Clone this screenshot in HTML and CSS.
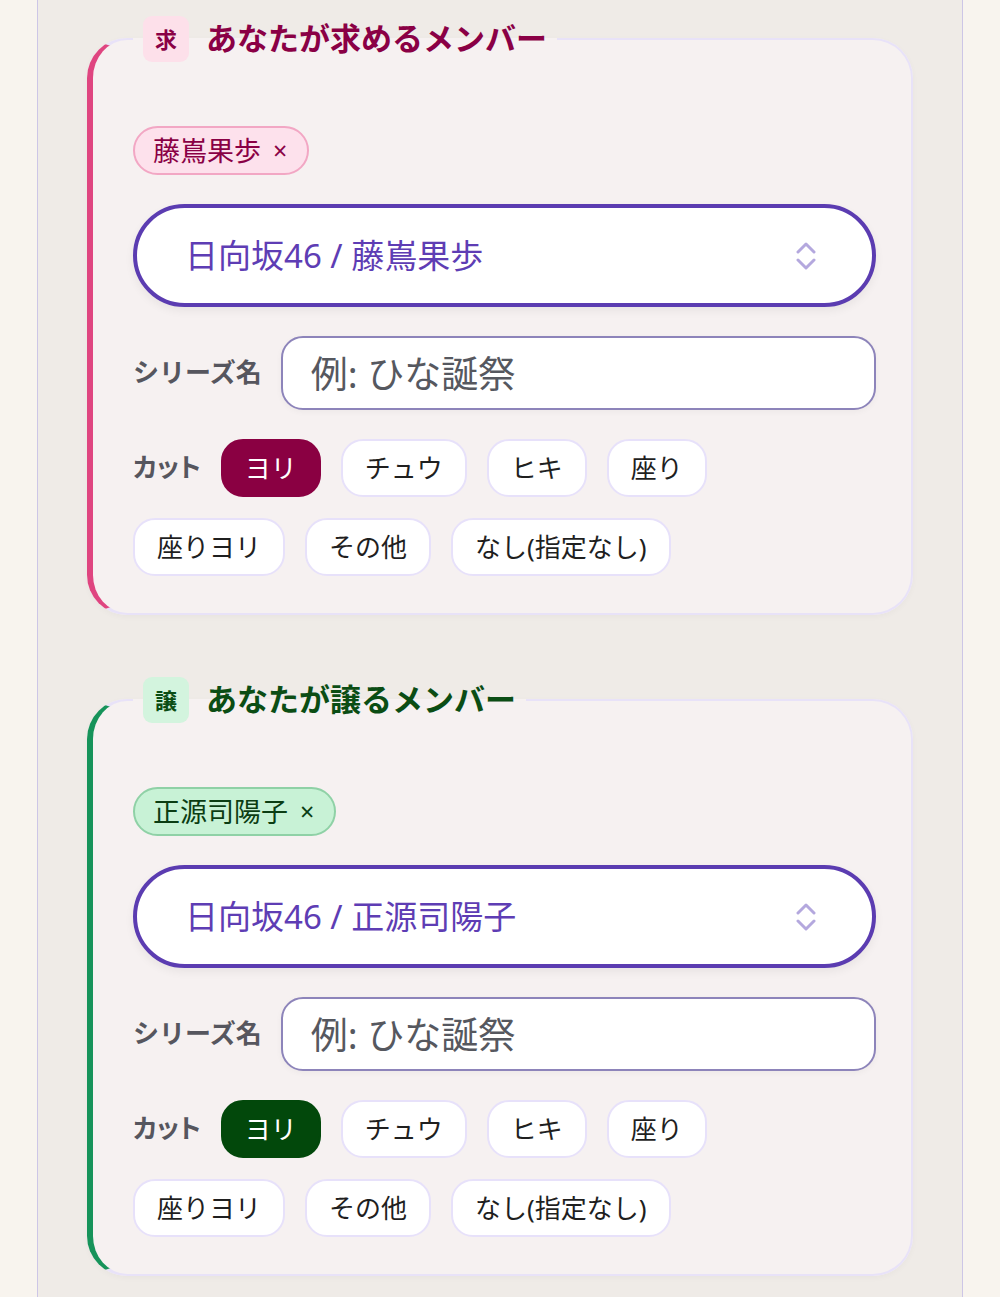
FILE: index.html
```html
<!DOCTYPE html>
<html lang="ja">
<head>
    <meta charset="UTF-8">
    <meta name="viewport" content="width=device-width, initial-scale=1.0">
    <title>メンバー交換</title>
    <link rel="stylesheet" href="styles.css">
</head>
<body>
    <div class="page">
        <fieldset class="card want">
            <legend class="card-title">
                <span class="badge">求</span>
                <span class="title-text">あなたが求めるメンバー</span>
            </legend>
            <div class="card-body">
                <div class="chips">
                    <span class="chip">藤嶌果歩 <span class="chip-x">×</span></span>
                </div>
                <div class="select">
                    <span class="select-text">日向坂46 / 藤嶌果歩</span>
                    <svg class="select-icon" width="20" height="30" viewBox="0 0 20 30">
                        <path d="M2 11 L10 3 L18 11" fill="none" stroke="#b4a8de" stroke-width="3" stroke-linecap="round" stroke-linejoin="round"/>
                        <path d="M2 19 L10 27 L18 19" fill="none" stroke="#b4a8de" stroke-width="3" stroke-linecap="round" stroke-linejoin="round"/>
                    </svg>
                </div>
                <div class="field-row">
                    <label class="field-label">シリーズ名</label>
                    <input class="text-input" type="text" placeholder="例: ひな誕祭">
                </div>
                <div class="cut-row">
                    <span class="field-label">カット</span>
                    <button class="cut selected">ヨリ</button>
                    <button class="cut">チュウ</button>
                    <button class="cut">ヒキ</button>
                    <button class="cut">座り</button>
                    <button class="cut">座りヨリ</button>
                    <button class="cut">その他</button>
                    <button class="cut">なし(指定なし)</button>
                </div>
            </div>
        </fieldset>

        <fieldset class="card give">
            <legend class="card-title">
                <span class="badge">譲</span>
                <span class="title-text">あなたが譲るメンバー</span>
            </legend>
            <div class="card-body">
                <div class="chips">
                    <span class="chip">正源司陽子 <span class="chip-x">×</span></span>
                </div>
                <div class="select">
                    <span class="select-text">日向坂46 / 正源司陽子</span>
                    <svg class="select-icon" width="20" height="30" viewBox="0 0 20 30">
                        <path d="M2 11 L10 3 L18 11" fill="none" stroke="#b4a8de" stroke-width="3" stroke-linecap="round" stroke-linejoin="round"/>
                        <path d="M2 19 L10 27 L18 19" fill="none" stroke="#b4a8de" stroke-width="3" stroke-linecap="round" stroke-linejoin="round"/>
                    </svg>
                </div>
                <div class="field-row">
                    <label class="field-label">シリーズ名</label>
                    <input class="text-input" type="text" placeholder="例: ひな誕祭">
                </div>
                <div class="cut-row">
                    <span class="field-label">カット</span>
                    <button class="cut selected">ヨリ</button>
                    <button class="cut">チュウ</button>
                    <button class="cut">ヒキ</button>
                    <button class="cut">座り</button>
                    <button class="cut">座りヨリ</button>
                    <button class="cut">その他</button>
                    <button class="cut">なし(指定なし)</button>
                </div>
            </div>
        </fieldset>
    </div>
</body>
</html>
```

FILE: styles.css
```css
* {
    margin: 0;
    padding: 0;
    box-sizing: border-box;
    font-family: 'Noto Sans', 'Noto Sans CJK JP', sans-serif;
}

body {
    background: #f8f4ee;
    color: #1f1f1f;
}

.page {
    width: 926px;
    min-height: 100vh;
    margin: 0 auto;
    padding: 16px 49px 40px;
    background: #efebe7;
    border-left: 1px solid #cdc6e6;
    border-right: 1px solid #cdc6e6;
}

.card {
    background: #f6f1f1;
    border: 2px solid #e8e2f8;
    border-radius: 40px;
    padding: 64px 35px 37px 40px;
    box-shadow: 0 2px 6px rgba(0, 0, 0, 0.03);
}

.card + .card {
    margin-top: 62px;
}

.want {
    border-left: 6px solid #df4580;
}

.give {
    border-left: 6px solid #16935a;
}

.card-title {
    display: flex;
    align-items: center;
    gap: 17px;
    padding: 0 10px;
}

.badge {
    width: 46px;
    height: 46px;
    border-radius: 9px;
    display: flex;
    align-items: center;
    justify-content: center;
    font-size: 22px;
    font-weight: 700;
    line-height: 1;
}

.title-text {
    font-size: 31px;
    font-weight: 700;
    line-height: 1.2;
}

.want .badge {
    background: #fde0ea;
    color: #8a0045;
}

.want .title-text {
    color: #8a0045;
}

.give .badge {
    background: #d3f4de;
    color: #0b4d14;
}

.give .title-text {
    color: #0b4d14;
}

.card-body {
    display: flex;
    flex-direction: column;
    gap: 29px;
}

.chips {
    display: flex;
}

.chip {
    display: inline-flex;
    align-items: center;
    gap: 12px;
    height: 49px;
    padding: 0 20px 0 18px;
    border-radius: 999px;
    border: 2px solid;
    font-size: 27px;
    line-height: 1;
}

.chip-x {
    font-size: 25px;
}

.want .chip {
    background: #fde1ec;
    border-color: #f2a7c4;
    color: #8a0045;
}

.give .chip {
    background: #c8f2d6;
    border-color: #8fd1a6;
    color: #0b3d13;
}

.select {
    display: flex;
    align-items: center;
    justify-content: space-between;
    height: 103px;
    padding: 0 56px 0 48px;
    background: #fff;
    border: 4px solid #5b3cb1;
    border-radius: 999px;
    box-shadow: 0 4px 10px rgba(0, 0, 0, 0.06);
}

.select-text {
    font-size: 33px;
    color: #5e3db4;
    line-height: 1.2;
}

.field-row {
    display: flex;
    align-items: center;
    gap: 19px;
}

.field-label {
    font-size: 26px;
    font-weight: 700;
    color: #56565e;
    line-height: 1.2;
}

.text-input {
    flex: 1;
    height: 74px;
    padding: 0 28px;
    border: 2px solid #8d84ba;
    border-radius: 22px;
    background: #fff;
    font-size: 37px;
    color: #2d2d33;
    box-shadow: 0 2px 6px rgba(0, 0, 0, 0.04);
}

.text-input::placeholder {
    color: #56585f;
}

.cut-row {
    display: flex;
    flex-wrap: wrap;
    align-items: center;
    gap: 21px 20px;
}

.cut-row .field-label {
    font-feature-settings: "palt";
}

.cut {
    height: 58px;
    padding: 0 22px;
    background: #fff;
    border: 2px solid #e7e1fa;
    border-radius: 22px;
    font-size: 26px;
    color: #1f1f1f;
    line-height: 1;
    cursor: pointer;
}

.want .cut.selected {
    background: #8a0042;
    border-color: #8a0042;
    color: #fff;
}

.give .cut.selected {
    background: #02480b;
    border-color: #02480b;
    color: #fff;
}
```
